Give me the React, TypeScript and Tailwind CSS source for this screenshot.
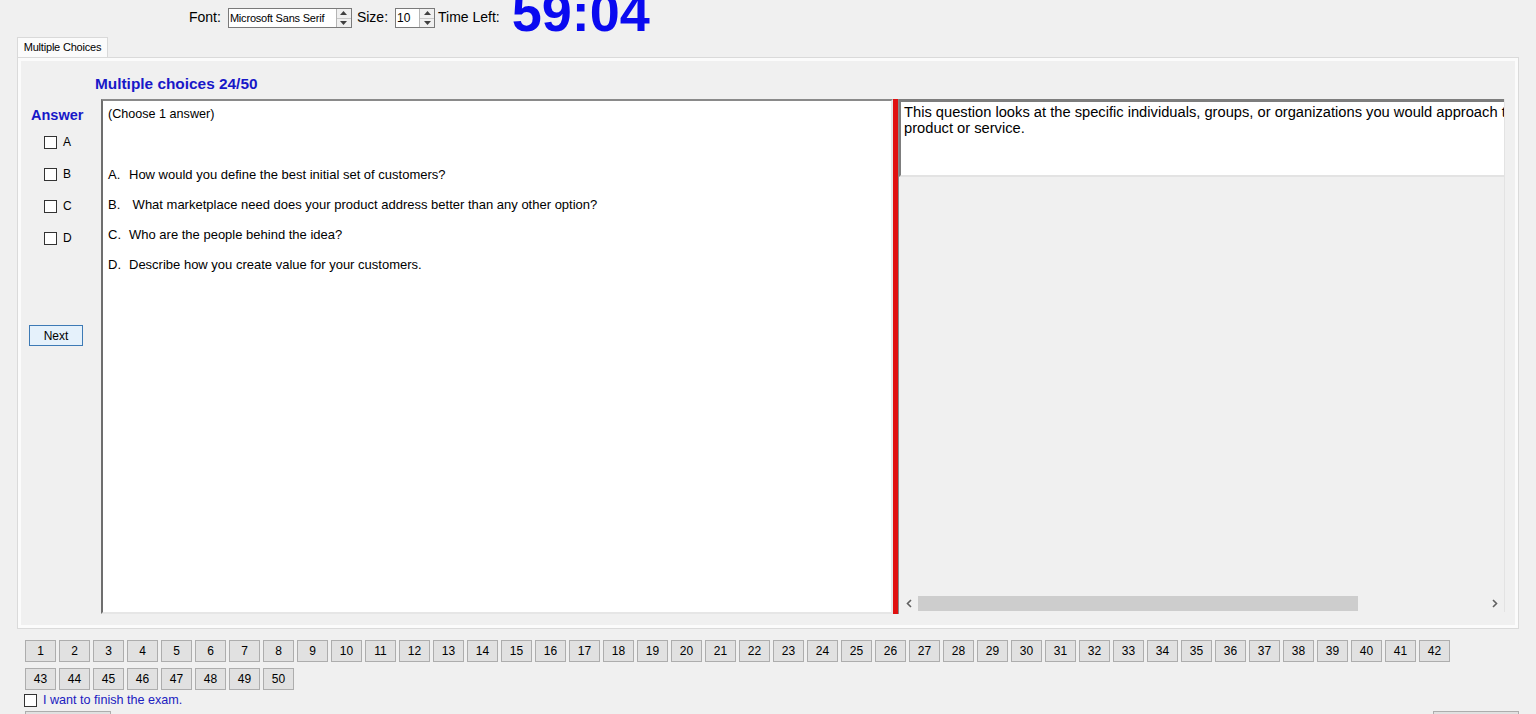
import React from "react";

function Spinner() {
  return (
    <div className="flex h-full w-[15px] flex-col border-l border-[#b5b5b5] bg-[#f0f0f0]">
      <div className="flex flex-1 items-center justify-center border-b border-[#c8c8c8]">
        <svg width="7" height="4" viewBox="0 0 7 4">
          <polygon points="0,4 7,4 3.5,0" fill="#404040" />
        </svg>
      </div>
      <div className="flex flex-1 items-center justify-center">
        <svg width="7" height="4" viewBox="0 0 7 4">
          <polygon points="0,0 7,0 3.5,4" fill="#404040" />
        </svg>
      </div>
    </div>
  );
}

function Check() {
  return <div className="h-[13px] w-[13px] shrink-0 border border-[#333333] bg-white" />;
}

const options = [
  ["A.", "How would you define the best initial set of customers?"],
  ["B.", " What marketplace need does your product address better than any other option?"],
  ["C.", "Who are the people behind the idea?"],
  ["D.", "Describe how you create value for your customers."],
];

export default function App() {
  const nums = Array.from({ length: 50 }, (_, i) => i + 1);
  return (
    <div className="min-h-[714px] w-[1536px] overflow-hidden bg-[#f0f0f0] font-['Liberation_Sans',Arial,sans-serif] text-black">
      {/* toolbar */}
      <div className="flex h-[37px] items-start pl-[189px]">
        <span className="mt-[9px] text-[14px] leading-[16px]">Font:</span>
        <div className="ml-[7px] mt-[8px] flex h-[20px] w-[124px] items-stretch border border-[#7a7a7a] bg-white">
          <span className="flex-1 pl-[1px] text-[11px] leading-[18px] tracking-[-0.2px]">Microsoft Sans Serif</span>
          <Spinner />
        </div>
        <span className="ml-[5px] mt-[9px] text-[14px] leading-[16px]">Size:</span>
        <div className="ml-[7px] mt-[8px] flex h-[20px] w-[40px] items-stretch border border-[#7a7a7a] bg-white">
          <span className="flex-1 pl-[1px] text-[12px] leading-[18px]">10</span>
          <Spinner />
        </div>
        <span className="ml-[3px] mt-[9px] text-[14px] leading-[16px]">Time Left:</span>
        <span className="ml-[12px] mt-[-15px] text-[54px] font-bold leading-[54px] text-[#0a0af0]">59:04</span>
      </div>

      {/* tab header */}
      <div className="ml-[17px] flex">
        <div className="flex h-[20px] w-[91px] items-center justify-center border border-b-0 border-[#d9d9d9] bg-[#fbfbfb] text-[11px] tracking-[-0.2px]">
          Multiple Choices
        </div>
      </div>

      {/* tab panel */}
      <div className="ml-[17px] w-[1502px] border border-[#dadada] bg-[#fbfbfb] p-[3px]">
        <div className="flex h-[564px] flex-col bg-[#f0f0f0]">
          <div className="h-[38px] pl-[74px] pt-[15px] text-[15.4px] font-bold leading-[16px] text-[#1818c8]">
            Multiple choices 24/50
          </div>
          <div className="flex h-[515px]">
            {/* answer column */}
            <div className="w-[80px] shrink-0 pt-[7px]">
              <div className="h-[18px] pl-[10px] text-[14.5px] font-bold leading-[18px] text-[#1818c8]">Answer</div>
              <div className="mt-[2px]">
                {["A", "B", "C", "D"].map((l) => (
                  <div key={l} className="flex h-[32px] items-center pl-[23px]">
                    <Check />
                    <span className="ml-[6px] text-[12px]">{l}</span>
                  </div>
                ))}
              </div>
              <div className="ml-[8px] mt-[71px] flex h-[21px] w-[54px] items-center justify-center border border-[#3d7ab5] bg-[#e5f1fb] text-[12px]">
                Next
              </div>
            </div>

            {/* question box */}
            <div className="h-[515px] w-[792px] shrink-0 border-2 border-b-[#e6e6e6] border-l-[#6e6e6e] border-r-[#e6e6e6] border-t-[#8a8a8a] bg-white pl-[5px] pt-[5px]">
              <div className="h-[16px] text-[12.6px] leading-[16px]">(Choose 1 answer)</div>
              <div className="mt-[38px]">
                {options.map(([k, t]) => (
                  <div key={k} className="flex h-[30px] items-center whitespace-pre text-[13px]">
                    <span className="w-[21px] shrink-0">{k}</span>
                    <span>{t}</span>
                  </div>
                ))}
              </div>
            </div>

            {/* splitter */}
            <div className="flex h-[515px] w-[6px] shrink-0">
              <div className="w-[5px] bg-[#e01010]" />
              <div className="w-[1px] bg-[#8a8a8a]" />
            </div>

            {/* right pane */}
            <div className="flex h-[513px] w-[606px] shrink-0 flex-col border-r border-[#e3e3e3]">
              <div className="h-[78px] overflow-hidden whitespace-nowrap border-b-2 border-l-2 border-t-[3px] border-b-[#e3e3e3] border-l-[#7d7d7d] border-t-[#7d7d7d] bg-white pl-[3px] pt-[2px] text-[14.7px] leading-[16px]">
                This question looks at the specific individuals, groups, or organizations you would approach to
                <br />
                product or service.
              </div>
              <div className="flex-1 bg-[#f0f0f0]" />
              <div className="flex h-[17px] items-center bg-[#f0f0f0]">
                <div className="flex w-[19px] items-center justify-center">
                  <svg width="6" height="9" viewBox="0 0 6 9">
                    <polyline points="5,1 1.5,4.5 5,8" fill="none" stroke="#606060" strokeWidth="1.6" />
                  </svg>
                </div>
                <div className="h-[15px] w-[440px] bg-[#cdcdcd]" />
                <div className="flex-1" />
                <div className="flex w-[19px] items-center justify-center">
                  <svg width="6" height="9" viewBox="0 0 6 9">
                    <polyline points="1,1 4.5,4.5 1,8" fill="none" stroke="#606060" strokeWidth="1.6" />
                  </svg>
                </div>
              </div>
            </div>
          </div>
        </div>
      </div>

      {/* number buttons */}
      <div className="ml-[25px] mt-[11px] flex w-[1428px] flex-wrap gap-x-[3px] gap-y-[6px]">
        {nums.map((n) => (
          <div
            key={n}
            className="flex h-[22px] w-[31px] items-center justify-center border border-[#adadad] bg-[#e1e1e1] text-[12px]"
          >
            {n}
          </div>
        ))}
      </div>
      <div className="ml-[24px] mt-[2px] flex h-[16px] items-center">
        <Check />
        <span className="ml-[6px] text-[12.6px] leading-[16px] text-[#2020c0]">I want to finish the exam.</span>
      </div>
      <div className="flex justify-between pl-[25px] pr-[17px] pt-[3px]">
        <div className="h-[23px] w-[86px] border border-[#adadad] bg-[#e1e1e1]" />
        <div className="h-[23px] w-[86px] border border-[#adadad] bg-[#e1e1e1]" />
      </div>
    </div>
  );
}
